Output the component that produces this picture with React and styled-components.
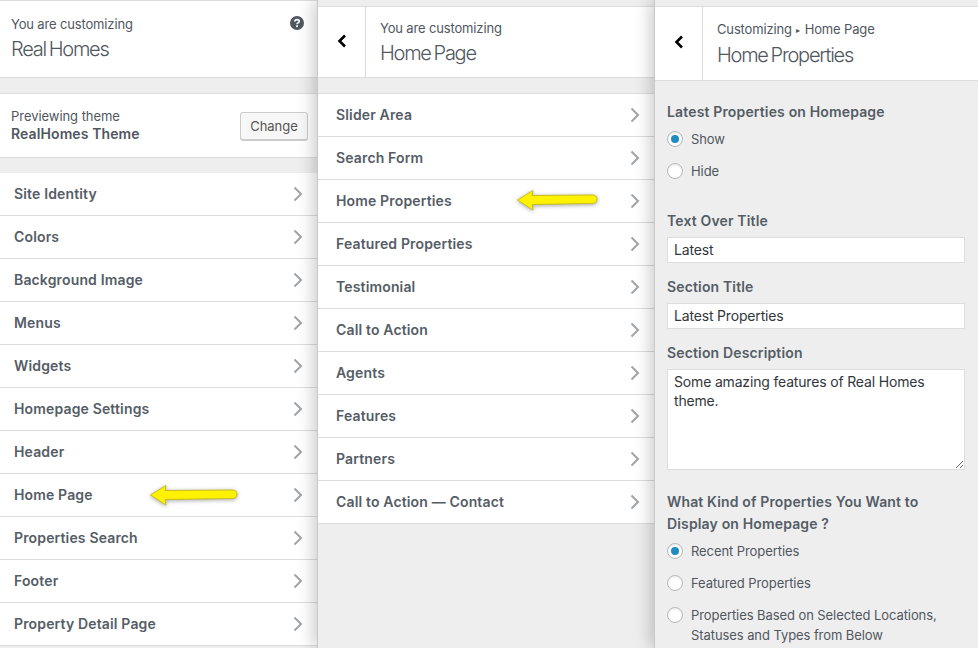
import styled, { createGlobalStyle } from 'styled-components'

const mainItems = [
  'Site Identity',
  'Colors',
  'Background Image',
  'Menus',
  'Widgets',
  'Homepage Settings',
  'Header',
  'Home Page',
  'Properties Search',
  'Footer',
  'Property Detail Page',
]

const homeItems = [
  'Slider Area',
  'Search Form',
  'Home Properties',
  'Featured Properties',
  'Testimonial',
  'Call to Action',
  'Agents',
  'Features',
  'Partners',
  'Call to Action — Contact',
]

function Chevron() {
  return (
    <ChevronIcon viewBox="0 0 10 16">
      <path d="M1.5 1.5 L8 8 L1.5 14.5" fill="none" stroke="#a0a5aa" strokeWidth="2" />
    </ChevronIcon>
  )
}

function BackArrow() {
  return (
    <svg width="10" height="14" viewBox="0 0 10 14">
      <path d="M8 1.5 L2.5 7 L8 12.5" fill="none" stroke="#000" strokeWidth="2.6" />
    </svg>
  )
}

function YellowArrow({ left, top, width }) {
  const end = width - 3
  return (
    <ArrowIcon $left={left} $top={top} width={width} height="24" viewBox={`0 0 ${width} 24`}>
      <path
        d={`M1.5 11 L17 1.5 L16 6.5 L${end - 5} 6 Q${end} 6 ${end} 10 Q${end} 14.5 ${end - 5} 14.5 L16 15.5 L17 21 Z`}
        fill="#fff200"
        stroke="#c8bd1a"
        strokeWidth="1"
        strokeLinejoin="round"
      />
    </ArrowIcon>
  )
}

function MenuList({ items, arrow, inset, first }) {
  return (
    <List $first={first}>
      {items.map((item) => (
        <Row key={item} $inset={inset}>
          {item}
          {item === arrow.on && <YellowArrow left={arrow.left} top={arrow.top} width={arrow.width} />}
          <Chevron />
        </Row>
      ))}
    </List>
  )
}

function Radio({ label, checked }) {
  return (
    <RadioRow>
      <RadioDot $checked={checked} />
      <RadioLabel>{label}</RadioLabel>
    </RadioRow>
  )
}

export default function App() {
  return (
    <>
      <GlobalStyle />
      <Page>
        <Panel $width={318} $layer={1}>
          <MainHeader>
            <HeaderText>
              <Small>You are customizing</Small>
              <Title>Real Homes</Title>
            </HeaderText>
            <HelpIcon viewBox="0 0 14 14">
              <circle cx="7" cy="7" r="7" fill="#50575e" />
              <path
                d="M4.9 5.4 C4.9 3 9.2 3 9.2 5.3 C9.2 6.9 7 6.8 7 8.2"
                fill="none"
                stroke="#fff"
                strokeWidth="1.7"
              />
              <rect x="6.1" y="9.3" width="1.8" height="1.8" fill="#fff" />
            </HelpIcon>
          </MainHeader>
          <ThemeBox>
            <div>
              <ThemeLabel>Previewing theme</ThemeLabel>
              <ThemeName>RealHomes Theme</ThemeName>
            </div>
            <ChangeButton>Change</ChangeButton>
          </ThemeBox>
          <MenuList first items={mainItems} inset={14} arrow={{ on: 'Home Page', left: 149, top: 10, width: 91 }} />
        </Panel>

        <Panel $width={337} $layer={2}>
          <SubHeader $height={72}>
            <BackButton>
              <BackArrow />
            </BackButton>
            <SubText $top={13}>
              <Small>You are customizing</Small>
              <Title>Home Page</Title>
            </SubText>
          </SubHeader>
          <MenuList items={homeItems} inset={18} arrow={{ on: 'Home Properties', left: 198, top: 9, width: 84 }} />
        </Panel>

        <Panel $width={323} $layer={3}>
          <SubHeader $height={75}>
            <BackButton>
              <BackArrow />
            </BackButton>
            <SubText $top={14}>
              <Small>
                Customizing <Caret>▸</Caret> Home Page
              </Small>
              <Title>Home Properties</Title>
            </SubText>
          </SubHeader>
          <Form>
            <Heading>Latest Properties on Homepage</Heading>
            <Radio label="Show" checked />
            <Radio label="Hide" />
            <FieldLabel $top={25}>Text Over Title</FieldLabel>
            <TextField defaultValue="Latest" />
            <FieldLabel $top={14}>Section Title</FieldLabel>
            <TextField defaultValue="Latest Properties" />
            <FieldLabel $top={14}>Section Description</FieldLabel>
            <TextArea defaultValue="Some amazing features of Real Homes theme." />
            <KindHeading>What Kind of Properties You Want to Display on Homepage ?</KindHeading>
            <Radio label="Recent Properties" checked />
            <Radio label="Featured Properties" />
            <Radio
              label={
                <>
                  Properties Based on Selected Locations,
                  <br />
                  Statuses and Types from Below
                </>
              }
            />
          </Form>
        </Panel>
      </Page>
    </>
  )
}

const GlobalStyle = createGlobalStyle`
  html, body {
    margin: 0;
    padding: 0;
    overflow: hidden;
    background: #eee;
  }
  body {
    font-family: Inter, "Liberation Sans", sans-serif;
    color: #50575e;
  }
`

const Page = styled.div`
  display: flex;
  width: 978px;
  height: 648px;
  overflow: hidden;
`

const Panel = styled.section`
  position: relative;
  z-index: ${(p) => p.$layer};
  flex: none;
  width: ${(p) => p.$width}px;
  height: 648px;
  overflow: ${(p) => (p.$layer === 3 ? 'hidden' : 'visible')};
  background: #eeeeee;
  box-shadow: ${(p) => (p.$layer === 1 ? 'none' : '-1px 0 0 #c9c9c9, -4px 0 16px rgba(0, 0, 0, 0.22)')};
`

const MainHeader = styled.header`
  display: flex;
  justify-content: space-between;
  height: 78px;
  padding: 15px 14px 0 11px;
  box-sizing: border-box;
  background: #fff;
  border-top: 1px solid #ddd;
  border-bottom: 1px solid #ddd;
`

const HeaderText = styled.div`
  display: flex;
  flex-direction: column;
`

const Small = styled.span`
  font-size: 13px;
  line-height: 16px;
  letter-spacing: -0.15px;
  color: #50575e;
`

const Caret = styled.span`
  font-size: 8px;
  margin: 0 1px;
  vertical-align: 1px;
`

const Title = styled.span`
  margin-top: 5px;
  font-size: 20px;
  line-height: 24px;
  font-weight: 300;
  letter-spacing: -1.25px;
  word-spacing: -1.5px;
  color: #50575e;
`

const HelpIcon = styled.svg`
  width: 14px;
  height: 14px;
  margin: 0 0 0 auto;
`

const ThemeBox = styled.div`
  display: flex;
  justify-content: space-between;
  align-items: center;
  height: 65px;
  margin-top: 15px;
  padding: 0 10px 1px 11px;
  box-sizing: border-box;
  background: #fff;
  border-top: 1px solid #ddd;
  border-bottom: 1px solid #ddd;
`

const ThemeLabel = styled.div`
  font-size: 13px;
  line-height: 18px;
  letter-spacing: -0.05px;
  color: #50575e;
`

const ThemeName = styled.div`
  font-size: 14px;
  line-height: 18px;
  font-weight: 600;
  letter-spacing: 0.1px;
  color: #50575e;
`

const ChangeButton = styled.button`
  width: 68px;
  height: 28px;
  margin-top: 1px;
  padding: 0;
  font: 13px Inter, "Liberation Sans", sans-serif;
  color: #555;
  background: #f7f7f7;
  border: 1px solid #ccc;
  border-radius: 3px;
  box-shadow: 0 1px 0 #ccc;
`

const List = styled.div`
  margin-top: ${(p) => (p.$first ? 14 : 15)}px;
  background: #fff;
  border-top: 1px solid ${(p) => (p.$first ? '#eeeeee' : '#ddd')};
`

const Row = styled.div`
  position: relative;
  display: flex;
  justify-content: space-between;
  align-items: center;
  height: 43px;
  box-sizing: border-box;
  padding: 0 15px 1px ${(p) => p.$inset}px;
  font-size: 14px;
  font-weight: 600;
  letter-spacing: 0.15px;
  color: #555d66;
  border-bottom: 1px solid #ddd;
`

const ChevronIcon = styled.svg`
  width: 10px;
  height: 16px;
`

const ArrowIcon = styled.svg`
  position: absolute;
  left: ${(p) => p.$left}px;
  top: ${(p) => p.$top}px;
  filter: drop-shadow(0 1px 2px rgba(0, 0, 0, 0.35));
`

const SubHeader = styled.header`
  display: flex;
  height: ${(p) => p.$height}px;
  margin-top: 6px;
  background: #fff;
  border-top: 1px solid #ddd;
  border-bottom: 1px solid #ddd;
  box-sizing: border-box;
`

const BackButton = styled.div`
  display: flex;
  align-items: center;
  justify-content: center;
  flex: none;
  width: 48px;
  padding-bottom: 3px;
  box-sizing: border-box;
  border-right: 1px solid #ddd;
`

const SubText = styled.div`
  display: flex;
  flex-direction: column;
  padding: ${(p) => p.$top}px 0 0 14px;
`

const Form = styled.div`
  display: flex;
  flex-direction: column;
  padding: 21px 13px 0 12px;
`

const Heading = styled.div`
  font-size: 14px;
  line-height: 20px;
  font-weight: 600;
  letter-spacing: 0.15px;
  color: #555d66;
`

const FieldLabel = styled(Heading)`
  margin-top: ${(p) => p.$top}px;
  margin-bottom: 6px;
`

const KindHeading = styled(Heading)`
  margin-top: 21px;
  margin-bottom: -1px;
  line-height: 22px;
`

const RadioRow = styled.div`
  display: flex;
  align-items: flex-start;
  margin-top: 7px;
  margin-bottom: 5px;
`

const RadioDot = styled.span`
  position: relative;
  flex: none;
  width: 16px;
  height: 16px;
  margin-top: 2px;
  box-sizing: border-box;
  border-radius: 50%;
  background: #fff;
  border: 1px solid #b4b9be;
  box-shadow: inset 0 1px 2px rgba(0, 0, 0, 0.1);

  &::after {
    content: '';
    display: ${(p) => (p.$checked ? 'block' : 'none')};
    position: absolute;
    left: 3px;
    top: 3px;
    width: 8px;
    height: 8px;
    border-radius: 50%;
    background: #1e8cbe;
  }
`

const RadioLabel = styled.span`
  margin-left: 8px;
  font-size: 13px;
  line-height: 20px;
  letter-spacing: -0.08px;
  color: #50575e;
`

const TextField = styled.input`
  display: block;
  width: 298px;
  height: 26px;
  padding: 0 6px 2px;
  box-sizing: border-box;
  font: 14px Inter, "Liberation Sans", sans-serif;
  letter-spacing: -0.17px;
  color: #32373c;
  background: #fff;
  border: 1px solid #ddd;
  outline: none;
`

const TextArea = styled.textarea`
  display: block;
  width: 298px;
  height: 101px;
  padding: 2px 6px;
  box-sizing: border-box;
  font: 14px/19px Inter, "Liberation Sans", sans-serif;
  letter-spacing: -0.17px;
  color: #32373c;
  background: #fff;
  border: 1px solid #ddd;
  outline: none;
`
